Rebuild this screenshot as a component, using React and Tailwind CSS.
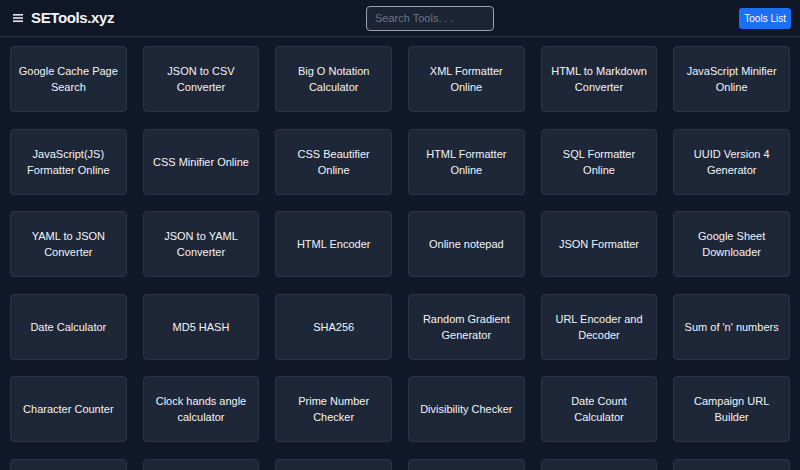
import React from 'react';

const tools = [
    "Google Cache Page Search",
    "JSON to CSV Converter",
    "Big O Notation Calculator",
    "XML Formatter Online",
    "HTML to Markdown Converter",
    "JavaScript Minifier Online",
    "JavaScript(JS) Formatter Online",
    "CSS Minifier Online",
    "CSS Beautifier Online",
    "HTML Formatter Online",
    "SQL Formatter Online",
    "UUID Version 4 Generator",
    "YAML to JSON Converter",
    "JSON to YAML Converter",
    "HTML Encoder",
    "Online notepad",
    "JSON Formatter",
    "Google Sheet Downloader",
    "Date Calculator",
    "MD5 HASH",
    "SHA256",
    "Random Gradient Generator",
    "URL Encoder and Decoder",
    "Sum of 'n' numbers",
    "Character Counter",
    "Clock hands angle calculator",
    "Prime Number Checker",
    "Divisibility Checker",
    "Date Count Calculator",
    "Campaign URL Builder",
];

const App = () => {
    return (
        <div className="min-h-screen bg-[#111827] text-white font-['Liberation_Sans',Arial,sans-serif]">
            {/* Header */}
            <header className="h-[37px] flex items-center pl-[13px] pr-[9px] border-b border-[#2a3342] bg-[#101726]">
                <div className="flex-1 flex items-center gap-[8px]">
                    <svg width="10" height="8" viewBox="0 0 10 8" className="text-gray-200">
                        <rect x="0" y="0" width="10" height="1.6" fill="currentColor" />
                        <rect x="0" y="3.2" width="10" height="1.6" fill="currentColor" />
                        <rect x="0" y="6.4" width="10" height="1.6" fill="currentColor" />
                    </svg>
                    <span className="text-[15px] font-bold tracking-tight text-gray-100">SETools.xyz</span>
                </div>
                <input
                    type="text"
                    placeholder="Search Tools. . ."
                    className="ml-[56px] w-[128px] h-[25px] rounded-[4px] border border-[#9aa3b2] bg-[#1c2433] px-[8px] text-[11px] text-gray-200 placeholder:text-[#6b7482] outline-none"
                />
                <div className="flex-1 flex justify-end">
                    <button className="h-[21px] px-[5px] rounded-[3px] bg-[#1a6ff3] text-[10px] text-white">
                        Tools List
                    </button>
                </div>
            </header>

            {/* Tools grid */}
            <main className="px-[10px] pt-[9px] grid grid-cols-6 gap-x-[16px] gap-y-[16.5px]">
                {tools.map((name) => (
                    <a
                        key={name}
                        href="#"
                        className="h-[66px] flex items-center justify-center text-center px-[5px] rounded-[4px] border border-[#2b3546] bg-[#1e2738] text-[11px] leading-[16px] text-gray-100"
                    >
                        {name}
                    </a>
                ))}
                {[0, 1, 2, 3, 4, 5].map((i) => (
                    <div key={i} className="h-[66px] rounded-[4px] border border-[#2b3546] bg-[#1e2738]" />
                ))}
            </main>
        </div>
    );
};

export default App;
